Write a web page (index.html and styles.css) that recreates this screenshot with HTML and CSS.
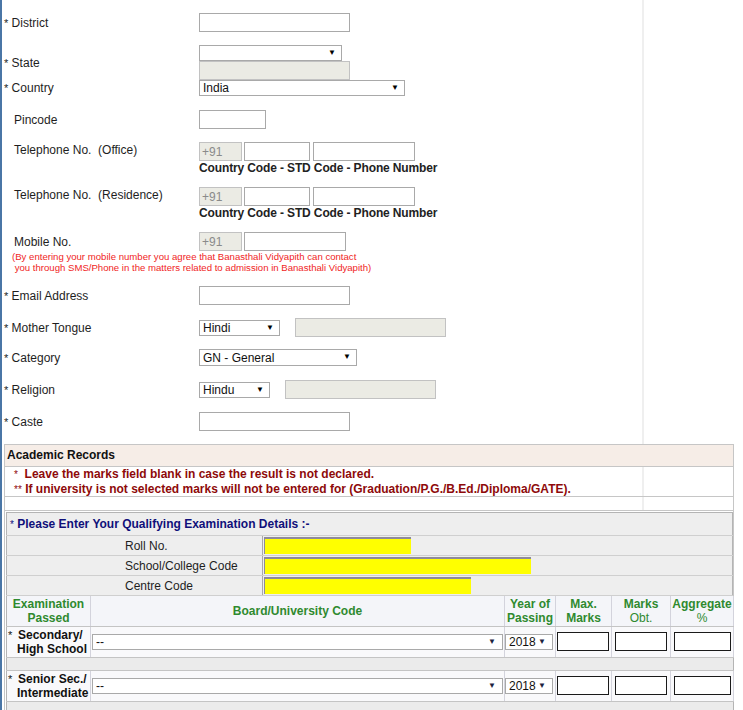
FILE: index.html
```html
<!DOCTYPE html>
<html lang="en">
<head>
<meta charset="utf-8">
<title>Application Form</title>
<link rel="stylesheet" href="styles.css">
</head>
<body>
<div class="page">
  <div class="form">
    <div class="row">
      <div class="lbl"><span class="ast">*</span> District</div>
      <div class="field"><input class="inp w151" type="text"></div>
    </div>
    <div class="row mt13">
      <div class="lbl"><span class="ast">*</span> State</div>
      <div class="field col">
        <span class="sel w143"><select><option></option></select></span>
        <input class="inp dis w151" type="text" disabled>
      </div>
    </div>
    <div class="row">
      <div class="lbl"><span class="ast">*</span> Country</div>
      <div class="field"><span class="sel w206"><select><option>India</option></select></span></div>
    </div>
    <div class="row mt14">
      <div class="lbl opt">Pincode</div>
      <div class="field"><input class="inp w67" type="text"></div>
    </div>
    <div class="row top mt13">
      <div class="lbl opt">Telephone No.&nbsp; (Office)</div>
      <div class="field col">
        <div class="line">
          <input class="inp dis w43" type="text" value="+91" disabled>
          <input class="inp w66 g2" type="text">
          <input class="inp w102 g3" type="text">
        </div>
        <div class="cap">Country Code - STD Code - Phone Number</div>
      </div>
    </div>
    <div class="row top mt12">
      <div class="lbl opt">Telephone No.&nbsp; (Residence)</div>
      <div class="field col">
        <div class="line">
          <input class="inp dis w43" type="text" value="+91" disabled>
          <input class="inp w66 g2" type="text">
          <input class="inp w102 g3" type="text">
        </div>
        <div class="cap">Country Code - STD Code - Phone Number</div>
      </div>
    </div>
    <div class="row mt12">
      <div class="lbl opt">Mobile No.</div>
      <div class="field">
        <div class="line">
          <input class="inp dis w43" type="text" value="+91" disabled>
          <input class="inp w102 g2" type="text">
        </div>
      </div>
    </div>
    <div class="mnote">(By entering your mobile number you agree that Banasthali Vidyapith can contact<br>&nbsp;you through SMS/Phone in the matters related to admission in Banasthali Vidyapith)</div>
    <div class="row mt13">
      <div class="lbl"><span class="ast">*</span> Email Address</div>
      <div class="field"><input class="inp w151" type="text"></div>
    </div>
    <div class="row mt13">
      <div class="lbl"><span class="ast">*</span> Mother Tongue</div>
      <div class="field">
        <div class="line mid">
          <span class="sel w81"><select><option>Hindi</option></select></span>
          <input class="inp dis w151 g15" type="text" disabled>
        </div>
      </div>
    </div>
    <div class="row mt12">
      <div class="lbl"><span class="ast">*</span> Category</div>
      <div class="field"><span class="sel w158 h17"><select><option>GN - General</option></select></span></div>
    </div>
    <div class="row mt14">
      <div class="lbl"><span class="ast">*</span> Religion</div>
      <div class="field">
        <div class="line mid">
          <span class="sel w71"><select><option>Hindu</option></select></span>
          <input class="inp dis w151 g15" type="text" disabled>
        </div>
      </div>
    </div>
    <div class="row mt13">
      <div class="lbl"><span class="ast">*</span> Caste</div>
      <div class="field"><input class="inp w151" type="text"></div>
    </div>
  </div>

  <div class="acad">
    <div class="acad-head">Academic Records</div>
    <div class="acad-notes">
      <div><span class="nast">*</span>&nbsp; Leave the marks field blank in case the result is not declared.</div>
      <div><span class="nast">**</span> If university is not selected marks will not be entered for (Graduation/P.G./B.Ed./Diploma/GATE).</div>
    </div>
    <div class="acad-blank"></div>

    <table class="qual">
      <colgroup><col class="qc1"><col></colgroup>
      <tr class="qhead">
        <td colspan="2"><span class="qast">*</span> Please Enter Your Qualifying Examination Details :-</td>
      </tr>
      <tr class="qrow">
        <td class="qlbl">Roll No.</td>
        <td class="qval"><input class="yel w147" type="text"></td>
      </tr>
      <tr class="qrow">
        <td class="qlbl">School/College Code</td>
        <td class="qval"><input class="yel w267" type="text"></td>
      </tr>
      <tr class="qrow">
        <td class="qlbl">Centre Code</td>
        <td class="qval"><input class="yel w207" type="text"></td>
      </tr>
    </table>

    <table class="marks">
      <colgroup>
        <col class="mc1"><col class="mc2"><col class="mc3"><col class="mc4"><col class="mc5"><col class="mc6">
      </colgroup>
      <tr class="mhead">
        <th>Examination<br>Passed</th>
        <th>Board/University Code</th>
        <th>Year of<br>Passing</th>
        <th>Max.<br>Marks</th>
        <th>Marks<br><span class="thin">Obt.</span></th>
        <th>Aggregate<br><span class="thin">%</span></th>
      </tr>
      <tr class="mrow">
        <td class="exam"><span class="east">*</span>Secondary/<br>High School</td>
        <td class="board"><span class="sel tsel wfull"><select><option>--</option></select></span></td>
        <td class="year"><span class="sel tsel w48"><select><option>2018</option></select></span></td>
        <td class="mk"><input class="mark w52" type="text"></td>
        <td class="mk c5"><input class="mark w52" type="text"></td>
        <td class="mk c6"><input class="mark w57" type="text"></td>
      </tr>
      <tr class="mblank"><td colspan="6"></td></tr>
      <tr class="mrow">
        <td class="exam"><span class="east">*</span>Senior Sec./<br>Intermediate</td>
        <td class="board"><span class="sel tsel wfull"><select><option>--</option></select></span></td>
        <td class="year"><span class="sel tsel w48"><select><option>2018</option></select></span></td>
        <td class="mk"><input class="mark w52" type="text"></td>
        <td class="mk c5"><input class="mark w52" type="text"></td>
        <td class="mk c6"><input class="mark w57" type="text"></td>
      </tr>
      <tr class="mblank"><td colspan="6"></td></tr>
    </table>
  </div>
</div>
</body>
</html>
```

FILE: styles.css
```css
* { box-sizing: border-box; }
html, body { margin: 0; padding: 0; }
body {
  font-family: "Liberation Sans", Arial, sans-serif;
  font-size: 12px;
  color: #1e1e1e;
  background: #fff;
  border-left: 2px solid #4a76a6;
  height: 710px;
  overflow: hidden;
}
.page {
  padding-top: 13px;
  background: linear-gradient(to right, transparent 640px, #efefef 640px, #efefef 642px, transparent 642px) no-repeat 0 0 / 100% 510px;
}

/* top form */
.form { display: flex; flex-direction: column; }
.row { display: flex; align-items: center; }
.row.top { align-items: flex-start; }
.row.top .lbl { line-height: 17px; }
.mt12 { margin-top: 12px; }
.mt13 { margin-top: 13px; }
.mt14 { margin-top: 14px; }
.lbl { width: 197px; flex: none; padding-left: 2px; line-height: 14px; white-space: nowrap; }
.lbl.opt { padding-left: 12px; }
.ast { font-size: 11px; }
.field { display: flex; }
.field.col { flex-direction: column; align-items: flex-start; }
.line { display: flex; align-items: flex-start; }
.line.mid { align-items: center; }
.cap { font-weight: bold; line-height: 14px; white-space: nowrap; color: #222; letter-spacing: -0.13px; }
.mnote {
  color: #f01e1e;
  font-size: 9.6px;
  line-height: 11px;
  padding-left: 10px;
  white-space: nowrap;
}

.inp {
  height: 19px;
  border: 1px solid #a9a9a9;
  background: #fff;
  font: 12px "Liberation Sans", Arial, sans-serif;
  padding: 0 2px;
  margin: 0;
  color: #222;
}
.inp.dis { background: #ebebe4; border-color: #c2c2c2; color: #8a8a8a; }
.line .g2 { margin-left: 2px; }
.line .g3 { margin-left: 3px; }
.line .g15 { margin-left: 15px; }
.w43 { width: 43px; }
.w48 { width: 48px; }
.w52 { width: 52px; }
.w57 { width: 57px; }
.w66 { width: 66px; }
.w67 { width: 67px; }
.w71 { width: 71px; }
.w81 { width: 81px; }
.w102 { width: 102px; }
.w143 { width: 143px; }
.w147 { width: 147px; }
.w151 { width: 151px; }
.w158 { width: 158px; }
.w206 { width: 206px; }
.w207 { width: 207px; }
.w267 { width: 267px; }
.wfull { width: 411px; }

.sel { display: inline-block; position: relative; height: 16px; }
.sel.h17 { height: 17px; }
.sel select {
  -webkit-appearance: none;
  appearance: none;
  display: block;
  width: 100%;
  height: 100%;
  margin: 0;
  border: 1px solid #a9a9a9;
  border-radius: 0;
  background: #fff;
  font: 12px "Liberation Sans", Arial, sans-serif;
  color: #111;
  padding: 0 14px 0 3px;
  line-height: 14px;
}
.sel::after {
  content: "\25BC";
  position: absolute;
  right: 6px;
  top: 0;
  font-size: 8px;
  line-height: 16px;
  color: #000;
  pointer-events: none;
}
.sel.tsel::after { color: #1c2340; right: 7px; }

/* academic records */
.acad {
  margin: 13px 0 0 2px;
  width: 730px;
  border: 1px solid #c6c6c6;
  border-bottom: none;
}
.acad-head {
  height: 22px;
  line-height: 21px;
  background: #f6ede7;
  border-bottom: 1px solid #c6c6c6;
  padding-left: 2px;
  font-weight: bold;
  color: #111;
}
.acad-notes {
  height: 30px;
  padding: 0 0 1px 9px;
  line-height: 14px;
  border-bottom: 1px solid #c6c6c6;
  color: #8e0a0a;
  font-weight: bold;
  white-space: nowrap;
}
.nast { font-size: 10px; font-weight: normal; }
.acad-blank { height: 14px; border-bottom: 1px solid #c6c6c6; margin-bottom: 1px; }

table { border-collapse: collapse; table-layout: fixed; width: 727px; margin-left: 1px; }
td, th { padding: 0; }

.qual { border: 1px solid #b4b4b4; background: #eeeeee; }
.qc1 { width: 256px; }
.qhead td {
  height: 23px;
  padding-left: 3px;
  color: #10107a;
  font-weight: bold;
  border-bottom: 1px solid #cfcfcf;
}
.qast { font-size: 10px; font-weight: normal; }
.qrow td { height: 20px; border-bottom: 1px solid #cfcfcf; }
.qrow .qlbl { padding-left: 118px; border-right: 1px solid #a8a8a8; color: #1e1e1e; }
.qval { padding-left: 1px; }
.yel {
  display: block;
  height: 17px;
  margin: 0;
  padding: 0;
  background: #ffff00;
  border: 0;
  border-top: 2px solid #8e8a9a;
  border-left: 1px solid #8e8a9a;
}

.marks { border: 1px solid #b4b4b4; border-top: none; }
.mc1 { width: 84px; }
.mc2 { width: 414px; }
.mc3 { width: 51px; }
.mc4 { width: 56px; }
.mc5 { width: 59px; }
.mc6 { width: 63px; }
.mhead th {
  height: 30px;
  background: #f4f5f9;
  color: #2f8a2f;
  font-weight: bold;
  line-height: 14px;
  text-align: center;
  vertical-align: middle;
  border-right: 1px solid #d3d3dc;
  border-bottom: 1px solid #c4c4c4;
  white-space: nowrap;
}
.thin { font-weight: normal; }
.mrow td {
  height: 31px;
  background: #f9f9fb;
  border-right: 1px solid #d3d3dc;
  border-bottom: 1px solid #c4c4c4;
  vertical-align: middle;
}
.mrow .exam {
  padding-left: 10px;
  text-indent: -9px;
  font-weight: bold;
  line-height: 14px;
  color: #111;
  white-space: nowrap;
}
.east { display: inline-block; width: 10px; text-indent: 0; font-weight: normal; font-size: 11px; vertical-align: top; }
.mrow .board { padding-left: 1px; }
.mrow .year { padding-left: 0; }
.mrow .mk { padding-left: 1px; }
.mrow .mk.c5 { padding-left: 3px; }
.mrow .mk.c6 { padding-left: 3px; }
.mblank td { height: 13px; background: #ebebeb; border-bottom: 1px solid #c4c4c4; }
.mark {
  display: block;
  height: 19px;
  margin: 0;
  border: 1px solid #1a1a1a;
  background: #fff;
  font: 12px "Liberation Sans", Arial, sans-serif;
}
```
